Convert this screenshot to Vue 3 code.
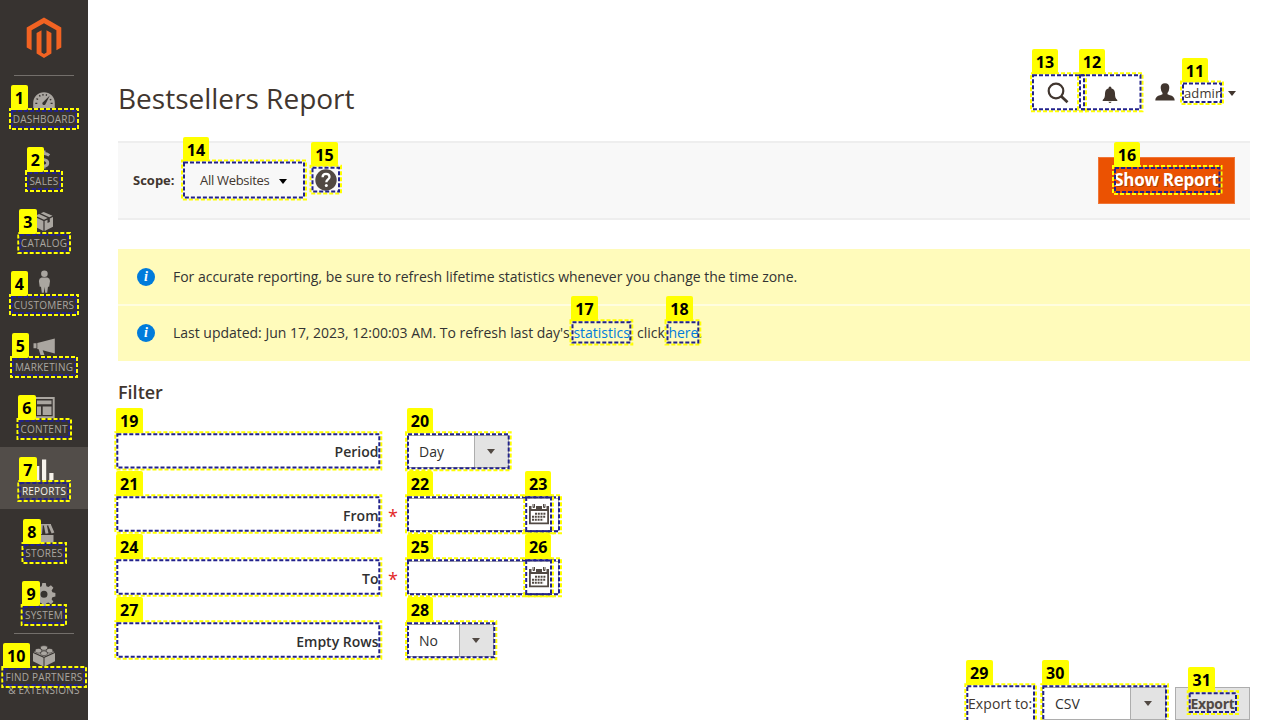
<script setup>
const menu = [
  { id: 'dashboard', label: 'Dashboard', dy: 0 },
  { id: 'sales', label: 'Sales', dy: -1 },
  { id: 'catalog', label: 'Catalog', dy: 0.5 },
  { id: 'customers', label: 'Customers', dy: 2.8 },
  { id: 'marketing', label: 'Marketing', dy: -2 },
  { id: 'content', label: 'Content', dy: 0.5 },
  { id: 'reports', label: 'Reports', active: true, dy: 0 },
  { id: 'stores', label: 'Stores', dy: -1 },
  { id: 'system', label: 'System', dy: 0 },
  { id: 'partners', label: 'Find Partners', second: '& Extensions', dy: 0.8 },
]

const fields = [
  { label: 'Period', type: 'select', value: 'Day', width: 102 },
  { label: 'From', type: 'date', required: true },
  { label: 'To', type: 'date', required: true },
  { label: 'Empty Rows', type: 'select', value: 'No', width: 87 },
]

// Element markers: number, left, top, right, bottom
const marks = [
  [1, 9, 108, 79, 130], [2, 25, 170, 63, 192], [3, 17.3, 232, 71, 254],
  [4, 9, 294, 79, 316], [5, 10, 356, 78, 378], [6, 16.5, 418, 72, 440],
  [7, 17.3, 480, 71, 502], [8, 21.5, 542, 67, 564], [9, 20.7, 604, 67, 626],
  [10, 1.3, 666, 87, 688], [13, 1030, 72.2, 1087, 112.2], [12, 1077, 72.2, 1143.5, 112.2],
  [11, 1180, 80.5, 1224, 105], [14, 181, 159.6, 307, 200.5], [15, 309.5, 164.8, 342, 194.5],
  [16, 1112, 165, 1222.5, 195], [17, 569.5, 319.3, 633.3, 345.5], [18, 664.5, 319.3, 701.3, 345.5],
  [19, 114.3, 431.3, 382.3, 470.5], [20, 405, 431.3, 511.7, 471.3],
  [21, 114.3, 494.3, 382.3, 533.7], [22, 405, 494.3, 562, 534.3], [23, 523.2, 494.3, 554, 534.3],
  [24, 114.3, 557.3, 382.3, 596.7], [25, 405, 557.3, 562, 597.3], [26, 523.2, 557.3, 554, 597.3],
  [27, 114.3, 620.3, 382.3, 659.7], [28, 405, 620.3, 497.3, 660.3],
  [29, 964.3, 683.3, 1037, 724], [30, 1040.3, 683.3, 1169, 724], [31, 1186.7, 690.3, 1239, 715],
].map(([n, x, y, r, b]) => ({ n, x, y, w: r - x, h: b - y }))
</script>

<template>
  <div class="page">
    <aside class="sidebar">
      <div class="logo">
        <svg width="36" height="42" viewBox="0 0 36 42"><path fill="#f26322" d="M18 .5 35.3 10.500V30.500L30.400 33.300V13.300L18 6.200 5.600 13.300V33.300L.7 30.500V10.500zM15.500 35.500 18 37 20.500 35.500V13.300L25.400 16.100V36.400L18 41 10.600 36.400V16.100L15.500 13.300z"/></svg>
      </div>
      <nav>
        <a v-for="m in menu" :key="m.id" class="item" :class="{ active: m.active, last: m.second }">
          <svg class="ico" width="24" height="24" :viewBox="`0 ${m.dy} 24 24`" fill="currentColor">
            <template v-if="m.id === 'dashboard'">
              <path d="M1.200 22V17A10.800 10.800 0 0 1 22.800 17V22z"/>
              <path d="M3.300 17.300h2M4.500 12.700l1.600.8M7.300 9.200l1 1.300M10.900 8l.2 1.600M14.600 8.300l-.4 1.400M19.300 13.300l-1.500.6M20.600 17.300h-2" stroke="#373330" stroke-width="1.300"/>
              <path d="M17.800 9.400 13.600 18A1.700 1.700 0 1 1 11.200 15.900z" fill="#373330"/>
            </template>
            <path v-else-if="m.id === 'sales'" d="M17.300 6.400Q14.900 4.600 12 4.600C6 4.600 6 10 11.200 10.400C17.500 11.400 17 17.200 11 17.200Q8.500 17 6.600 15.700M12 1.500v3M12 17v2.500" fill="none" stroke="currentColor" stroke-width="3"/>
            <path v-else-if="m.id === 'catalog'" d="M3.300 6.200 7.100 4.500 15.700 8.400 12 10.300zM8.700 3.800 11.700 2.500 20.500 6.200 17.300 7.700zM3 7.500 11.400 11.600V21.500L3 17.200zM12.600 11.600 15.500 10.200V13.500L17.800 12.400V9.100L21 7.500V17.200L12.600 21.500z"/>
            <path v-else-if="m.id === 'customers'" d="M12.400 1.200a3.300 3.300 0 1 1 0 6.600 3.300 3.300 0 1 1 0-6.600M9.500 8.200h6Q18 9 18 11.700L17.200 17.500H16L15.200 23.500H13.200L12.500 17.500 11.800 23.500H9.800L9 17.500H7.700L6.900 11.700Q7 9 9.500 8.200"/>
            <path v-else-if="m.id === 'marketing'" d="M1.500 7.300h3v5h-3zM5.300 7.100 22.800 2.400V17.500L10.700 14.300 12.400 19H8.500L6.700 13.200 5.300 12.900z"/>
            <path v-else-if="m.id === 'content'" fill-rule="evenodd" d="M1.500 1.500h21.200v21.200H1.500zM3.500 3.500v17.200h17.200V3.500zM5 5h14.500v3.800H5zM5 10.900h4v8.600H5zM10.700 10.900h8.800v8.600h-8.800z"/>
            <path v-else-if="m.id === 'reports'" d="M3 8h4.300v14H3zM10 1.500h4.200v20.500H10zM17.300 15h4.200V22h-4.200z"/>
            <template v-else-if="m.id === 'stores'">
              <path d="M3 14h18.500v7.500H3z"/>
              <path d="M5 4Q3 10 3 13M9.300 4 8.500 13M13.300 4 15 12.500M17.500 4 21 12" fill="none" stroke="currentColor" stroke-width="3"/>
              <path d="M4 3h15v1.500H4z"/>
            </template>
            <path v-else-if="m.id === 'system'" fill-rule="evenodd" d="m10.300 1 3.500.1.600 3.100 2 .9 2.500-1.800 2.500 2.400-1.800 2.700.8 1.900 3 .7v3.500l-3 .7-.8 2 1.800 2.600-2.500 2.400-2.600-1.800-2 .9-.5 3h-3.500l-.6-3-2-.9-2.600 1.800-2.500-2.400L4.400 17l-.8-1.800-3-.6v-3.500l3-.7.8-2-1.800-2.600L5.100 3.300l2.600 1.800 2-.8zM12 8.700a3.500 3.500 0 1 0 0 7 3.500 3.500 0 0 0 0-7"/>
            <template v-else>
              <path d="M1 9.800 11.500 14.500V23.300L1 18zM12.500 14.500 23 9.800V18L12.500 23.300zM1.500 8.800 12 4.500 22.500 8.800 12 13.500z"/>
              <path d="M8.500 4v1.500a3.500 1.600 0 0 0 7 0V4a3.500 1.600 0 0 0-7 0M3.200 6.800v1.500a3.300 1.600 0 0 0 6.600 0V6.800a3.300 1.600 0 0 0-6.600 0M14.200 6.800v1.500a3.300 1.600 0 0 0 6.600 0V6.800a3.300 1.600 0 0 0-6.600 0M8.600 9.300v1.500a3.400 1.600 0 0 0 6.800 0V9.300a3.400 1.600 0 0 0-6.800 0" stroke="#373330" stroke-width=".6"/>
            </template>
          </svg>
          <span>{{ m.label }}</span>
          <span v-if="m.second">{{ m.second }}</span>
        </a>
      </nav>
    </aside>

    <main>
      <header>
        <h1>Bestsellers Report</h1>
        <div class="tools">
          <svg class="search" width="22" height="22" viewBox="0 0 22 22" fill="none" stroke="#41362f"><circle cx="9" cy="9" r="7.300" stroke-width="2.200"/><path d="m14.200 14.200 6.300 6" stroke-width="2.800"/></svg>
          <svg class="bell" width="16" height="18" viewBox="0 0 16 18" fill="#41362f"><path d="M6.700 2.200V1.200Q8 0 9.300 1.200V2.200Q13 3.300 13 7.500C13 11 13.500 12.300 15.300 14V15H.7V14C2.500 12.300 3 11 3 7.500Q3 3.300 6.700 2.200M6.300 15.800h3.400Q8 18.200 6.300 15.800"/></svg>
          <svg class="user" width="20" height="18" viewBox="0 0 20 18" fill="#41362f"><path d="M10 .3C13 .3 14.500 2.200 14.300 5Q14 8.700 12.500 10V11.300C15.500 12.800 19.500 12.700 19.700 17.500H.3C.5 12.700 4.500 12.800 7.500 11.300V10Q6 8.700 5.700 5C5.500 2.200 7 .3 10 .3"/></svg>
          <span class="admin">admin</span>
          <i class="tri"></i>
        </div>
      </header>

      <section class="scope">
        <b>Scope:</b>
        <span class="sites">All Websites</span>
        <i class="tri black"></i>
        <svg class="help" width="22" height="22" viewBox="0 0 22 22"><circle cx="11" cy="11" r="10.700" fill="#514943"/><path d="M7.600 8.300Q7.600 4.900 11 4.900T14.500 8C14.500 10.300 11.300 10.500 11.300 13.300" fill="none" stroke="#fff" stroke-width="2.300"/><circle cx="11.300" cy="16.600" r="1.500" fill="#fff"/></svg>
        <button class="primary">Show Report</button>
      </section>

      <section class="messages">
        <p>
          <span class="info">i</span>
          <span>For accurate reporting, be sure to refresh lifetime statistics whenever you change the time zone.</span>
        </p>
        <p>
          <span class="info">i</span>
          <span>Last updated: Jun 17, 2023, 12:00:03 AM. To refresh last day's <a>statistics</a>, click <a>here</a>.</span>
        </p>
      </section>

      <h2>Filter</h2>
      <form>
        <div v-for="f in fields" :key="f.label" class="row">
          <label>{{ f.label }}</label>
          <span class="star">{{ f.required ? '*' : '' }}</span>
          <div v-if="f.type === 'select'" class="select" :style="{ width: f.width + 'px' }">
            <span>{{ f.value }}</span><div class="arrow"><i class="tri small"></i></div>
          </div>
          <div v-else class="date">
            <svg width="20" height="22" viewBox="0 0 20 22"><path d="M0 3h20v18.300H0zM1.800 8v11.500h16.400V8z" fill="#514943" fill-rule="evenodd"/><path d="M3.500 1v4h2.500V1M14 1v4h2.500V1" fill="none" stroke="#fff" stroke-width="2"/><path d="M4 1v3.500h1.500V1M14.500 1v3.500H16V1" fill="none" stroke="#514943"/><path d="M6 10.800h11M3 13.800h14M3 16.800h11.300" stroke="#514943" stroke-width="2" stroke-dasharray="2 .8"/></svg>
          </div>
        </div>
      </form>

      <footer>
        <span class="to">Export to:</span>
        <div class="select csv"><span>CSV</span><div class="arrow"><i class="tri small"></i></div></div>
        <button class="export">Export</button>
      </footer>
    </main>

    <div class="overlay">
      <svg width="1280" height="720" fill="none" stroke-width="2" stroke-dasharray="4 2">
        <g v-for="k in marks" :key="k.n">
          <rect :x="k.x + 1" :y="k.y + 1" :width="k.w - 2" :height="k.h - 2" stroke="#ffff00"/>
          <rect :x="k.x + 3" :y="k.y + 3" :width="k.w - 6" :height="k.h - 6" stroke="#22228c"/>
        </g>
      </svg>
      <span v-for="k in marks" :key="k.n" class="badge" :style="{ left: k.x + 1.7 + 'px', top: k.y - 23 + 'px', width: (k.n > 9 ? 26.5 : 17.5) + 'px' }">{{ k.n }}</span>
    </div>
  </div>
</template>

<style>
html, body { margin: 0; overflow: hidden; background: #fff; }
</style>

<style scoped>
* { box-sizing: border-box; }
.page { position: relative; width: 1280px; height: 720px; overflow: hidden; display: flex; background: #fff; font-family: "Open Sans", "Noto Sans", sans-serif; font-size: 14px; color: #303030; }
.sidebar { width: 88px; flex: none; background: #373330; }
.logo { height: 75px; padding: 17px 0 0 26px; }
.item { position: relative; display: flex; flex-direction: column; align-items: center; height: 62px; padding-top: 11px; color: #aaa6a0; font-size: 10px; line-height: 13px; text-transform: uppercase; white-space: nowrap; }
.item span { letter-spacing: .22px; }
.ico { margin-bottom: 3px; flex: none; overflow: visible; }
.item.active { background: #524d49; color: #f7f3eb; }
.item:first-child::before, .item.last::before { content: ""; position: absolute; top: 0; left: 14px; width: 60px; height: 1px; background: #736f6b; }
.item.last { height: 87px; }
main { flex: 1; min-width: 0; padding: 0 30px; display: flex; flex-direction: column; }
header { height: 141px; flex: none; display: flex; justify-content: space-between; }
h1 { margin: 79px 0 0; font-size: 28px; line-height: 38px; font-weight: 400; color: #41362f; white-space: nowrap; }
.tools { display: flex; align-items: center; height: 38px; margin-top: 74px; margin-right: 14px; }
.bell { margin-left: 33px; margin-top: 3px; }
.user { margin-left: 37px; margin-top: -2px; }
.admin { margin-left: 9px; font-size: 13px; width: 38px; color: #41362f; letter-spacing: .1px; }
.tri { display: block; margin-left: 6px; border: 4px solid transparent; border-top: 5px solid #41362f; border-bottom: 0; }
.scope { height: 79px; flex: none; display: flex; align-items: center; padding: 0 15px; background: #f8f8f8; border-top: 2px solid #eee; border-bottom: 2px solid #eee; font-size: 13px; color: #41362f; }
.scope b { width: 67px; padding-bottom: 2px; }
.sites { width: 70px; padding-bottom: 2px; white-space: nowrap; letter-spacing: -.3px; }
.tri.black { border-top-color: #000; margin-left: 9px; margin-top: 1px; }
.help { margin-left: 28px; margin-top: -2px; }
.primary { margin-left: auto; width: 137px; height: 47px; padding: 0 0 2px; border: 1px solid #f07637; background: #eb5202; color: #fff; font: 700 17px/24px "Open Sans", sans-serif; letter-spacing: -.3px; text-shadow: 1px 1px 0 rgba(0,0,0,.25); white-space: nowrap; }
.messages { margin-top: 29px; height: 111.5px; flex: none; display: flex; flex-direction: column; gap: 2px; background: #fffddf; }
.messages p { margin: 0; flex: 0 0 55px; display: flex; align-items: center; background: #fffbbb; padding: 0 0 1px 19px; white-space: nowrap; color: #333; letter-spacing: -.016px; }
.messages p + p { flex: 1; padding-bottom: 2px; }
.info { width: 18px; height: 18px; margin: 2px 18px 0 0; border-radius: 50%; background: #007bdb; color: #fff; text-align: center; font: italic bold 14px/18px "Liberation Serif", serif; }
.messages a { color: #007bdb; }
h2 { margin: 19.5px 0 0; height: 27px; font-size: 18px; line-height: 25px; font-weight: 600; color: #41362f; flex: none; }
form { padding-top: 28px; }
.row { display: flex; align-items: center; height: 33px; margin-bottom: 30px; }
label { width: 260.5px; text-align: right; font-weight: 600; white-space: nowrap; padding-top: 1px; }
.row:first-child label { padding-top: 0; padding-bottom: 1px; }
.star { width: 28.5px; padding-left: 9.5px; color: #e22626; font-size: 18px; line-height: 20px; height: 18px; }
.select { display: flex; height: 33px; border: 1px solid #adadad; background: #fff; }
.select span { flex: 1; padding-left: 12px; line-height: 31px; }
.row .select span { padding-left: 11px; }
.arrow { width: 34px; display: flex; align-items: center; justify-content: center; background: #e3e3e3; border-left: 1px solid #adadad; }
.row .arrow { padding-right: 1px; }
.csv .arrow { width: 35px; }
.tri.small { margin: 0; border-top-color: #514943; }
.date { width: 152px; height: 33px; border: 1px solid #adadad; display: flex; justify-content: flex-end; align-items: center; padding: 0 9px 2px; }
footer { display: flex; justify-content: flex-end; height: 33px; }
.to { line-height: 33px; width: 74px; color: #41362f; letter-spacing: .08px; }
.csv { width: 124px; }
.export { width: 75px; margin-left: 9px; padding: 0; border: 1px solid #adadad; background: #e3e3e3; color: #514943; font: 700 14px/20px "Open Sans", sans-serif; letter-spacing: -.3px; }
.overlay { position: absolute; inset: 0; pointer-events: none; }
.overlay svg { display: block; }
.badge { position: absolute; height: 24.5px; border-radius: 2px; background: #ff0; color: #000; font: 700 16px/26.400px "Noto Sans", sans-serif; text-align: center; }
</style>
